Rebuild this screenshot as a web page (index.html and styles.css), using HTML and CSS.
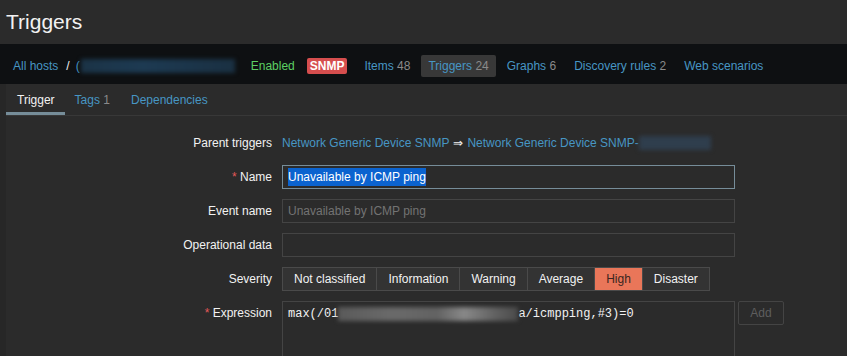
FILE: index.html
```html
<!DOCTYPE html>
<html lang="en">
<head>
    <meta charset="UTF-8">
    <title>Triggers</title>
    <link rel="stylesheet" href="styles.css">
</head>
<body>

<header class="page-title">
    <h1>Triggers</h1>
</header>

<nav class="host-nav">
    <a href="#" class="crumb">All hosts</a>
    <span class="crumb-sep">/</span>
    <a href="#" class="crumb host-name">(<span class="blur blur-host"></span></a>

    <span class="status-enabled">Enabled</span>
    <span class="badge-snmp">SNMP</span>

    <ul class="host-links">
        <li><a href="#">Items</a> <span class="count">48</span></li>
        <li class="selected"><a href="#">Triggers</a> <span class="count">24</span></li>
        <li><a href="#">Graphs</a> <span class="count">6</span></li>
        <li><a href="#">Discovery rules</a> <span class="count">2</span></li>
        <li><a href="#">Web scenarios</a></li>
    </ul>
</nav>

<main class="container">
    <ul class="tabs">
        <li class="active">Trigger</li>
        <li><a href="#">Tags</a> <span class="count">1</span></li>
        <li><a href="#">Dependencies</a></li>
    </ul>

    <form class="trigger-form">
        <div class="form-row">
            <label>Parent triggers</label>
            <div class="field-text">
                <a href="#">Network Generic Device SNMP</a>
                <span class="arrow">&rArr;</span>
                <a href="#">Network Generic Device SNMP-</a><span class="blur blur-parent"></span>
            </div>
        </div>

        <div class="form-row">
            <label><span class="required">*</span> Name</label>
            <div class="field focused"><span class="selected-text">Unavailable by ICMP ping</span></div>
        </div>

        <div class="form-row">
            <label>Event name</label>
            <div class="field placeholder">Unavailable by ICMP ping</div>
        </div>

        <div class="form-row">
            <label>Operational data</label>
            <div class="field"></div>
        </div>

        <div class="form-row">
            <label>Severity</label>
            <div class="severity">
                <button type="button">Not classified</button>
                <button type="button">Information</button>
                <button type="button">Warning</button>
                <button type="button">Average</button>
                <button type="button" class="on">High</button>
                <button type="button">Disaster</button>
            </div>
        </div>

        <div class="form-row">
            <label><span class="required">*</span> Expression</label>
            <div class="field expression">max(/01<span class="blur blur-expr"></span>a/icmpping,#3)=0</div>
            <button type="button" class="btn-add" disabled>Add</button>
        </div>
    </form>
</main>

</body>
</html>
```

FILE: styles.css
```css
body {
    margin: 0;
    background: #272727;
    color: #f2f2f2;
    font-family: "Liberation Sans", Arial, sans-serif;
    font-size: 12px;
    overflow: hidden;
}

a {
    color: #4796c4;
    text-decoration: none;
}

.count {
    color: #8a8a8a;
}

/* page title */
.page-title {
    background: #2b2b2b;
    height: 44px;
    padding: 0 6px;
}

.page-title h1 {
    margin: 0;
    font-size: 21px;
    font-weight: normal;
    line-height: 43px;
}

/* host navigation */
.host-nav {
    background: #0e1012;
    height: 40px;
    box-sizing: border-box;
    padding: 3px 0 0 13px;
    display: flex;
    align-items: center;
}

.crumb-sep {
    margin: 0 6px 0 8px;
    color: #f2f2f2;
}

.host-name {
    display: flex;
    align-items: center;
}

.blur {
    display: inline-block;
    filter: blur(2px);
}

.blur-host {
    width: 154px;
    height: 14px;
    margin-left: 1px;
    background: linear-gradient(90deg, #1b3346, #1d3a52 40%, #1a3042);
}

.status-enabled {
    color: #5ccf63;
    margin-left: 16px;
}

.badge-snmp {
    background: #d64e4e;
    color: #fff;
    font-weight: bold;
    padding: 1px 3px;
    border-radius: 2px;
    margin-left: 12px;
    line-height: 14px;
}

.host-links {
    list-style: none;
    display: flex;
    margin: 0 0 0 10px;
    padding: 0;
}

.host-links li {
    padding: 0 7px;
    height: 22px;
    line-height: 22px;
    margin-right: 4px;
    border-radius: 2px;
}

.host-links li.selected {
    background: #383838;
}

/* tabbed container */
.container {
    background: #2b2b2b;
    margin-left: 6px;
    height: 272px;
}

.tabs {
    list-style: none;
    display: flex;
    margin: 0;
    padding: 0;
    height: 31px;
    border-bottom: 1px solid #383838;
}

.tabs li {
    padding: 0 10px;
    line-height: 33px;
    height: 28px;
    border-bottom: 3px solid transparent;
}

.tabs li:first-child {
    padding-left: 11px;
}

.tabs li:last-child {
    padding-left: 11px;
}

.tabs li.active {
    border-bottom-color: #768d99;
}

/* form */
.trigger-form {
    padding-top: 15px;
}

.form-row {
    display: flex;
    align-items: flex-start;
    margin-bottom: 10px;
}

.form-row label {
    width: 276px;
    box-sizing: border-box;
    padding-right: 10px;
    text-align: right;
    line-height: 24px;
}

.required {
    color: #e45959;
}

.field-text {
    line-height: 24px;
    display: flex;
    align-items: center;
    white-space: nowrap;
}

.arrow {
    margin: 0 4px;
}

.blur-parent {
    width: 72px;
    height: 14px;
    background: #2f3e4d;
}

.field {
    width: 453px;
    height: 24px;
    box-sizing: border-box;
    border: 1px solid #444;
    padding: 0 5px;
    line-height: 22px;
    white-space: nowrap;
}

.field.focused {
    border-color: #768d99;
}

.selected-text {
    background: #0b63cf;
    color: #fff;
    padding: 2px 0;
}

.field.placeholder {
    color: #737373;
}

.severity {
    display: flex;
    border: 1px solid #4a4a4a;
    height: 24px;
    box-sizing: border-box;
}

.severity button {
    background: #333;
    color: #f2f2f2;
    border: 0;
    border-right: 1px solid #4a4a4a;
    padding: 0 11px;
    font-family: inherit;
    font-size: 12px;
}

.severity button:last-child {
    border-right: 0;
}

.severity button.on {
    background: #e97659;
    color: #3b2520;
}

.field.expression {
    height: 80px;
    font-family: "Liberation Mono", "Courier New", monospace;
    padding-top: 1px;
    display: flex;
    align-items: flex-start;
}

.blur-expr {
    width: 180px;
    height: 14px;
    margin-top: 4px;
    background: linear-gradient(90deg, #5a5a5a, #6a6a6a 30%, #626262 55%, #888 70%, #666 85%, #4a4a4a);
}

.btn-add {
    margin-left: 3px;
    width: 46px;
    height: 24px;
    background: transparent;
    border: 1px solid #444;
    border-radius: 2px;
    color: #5e5e5e;
    font-family: inherit;
    font-size: 12px;
}
```
